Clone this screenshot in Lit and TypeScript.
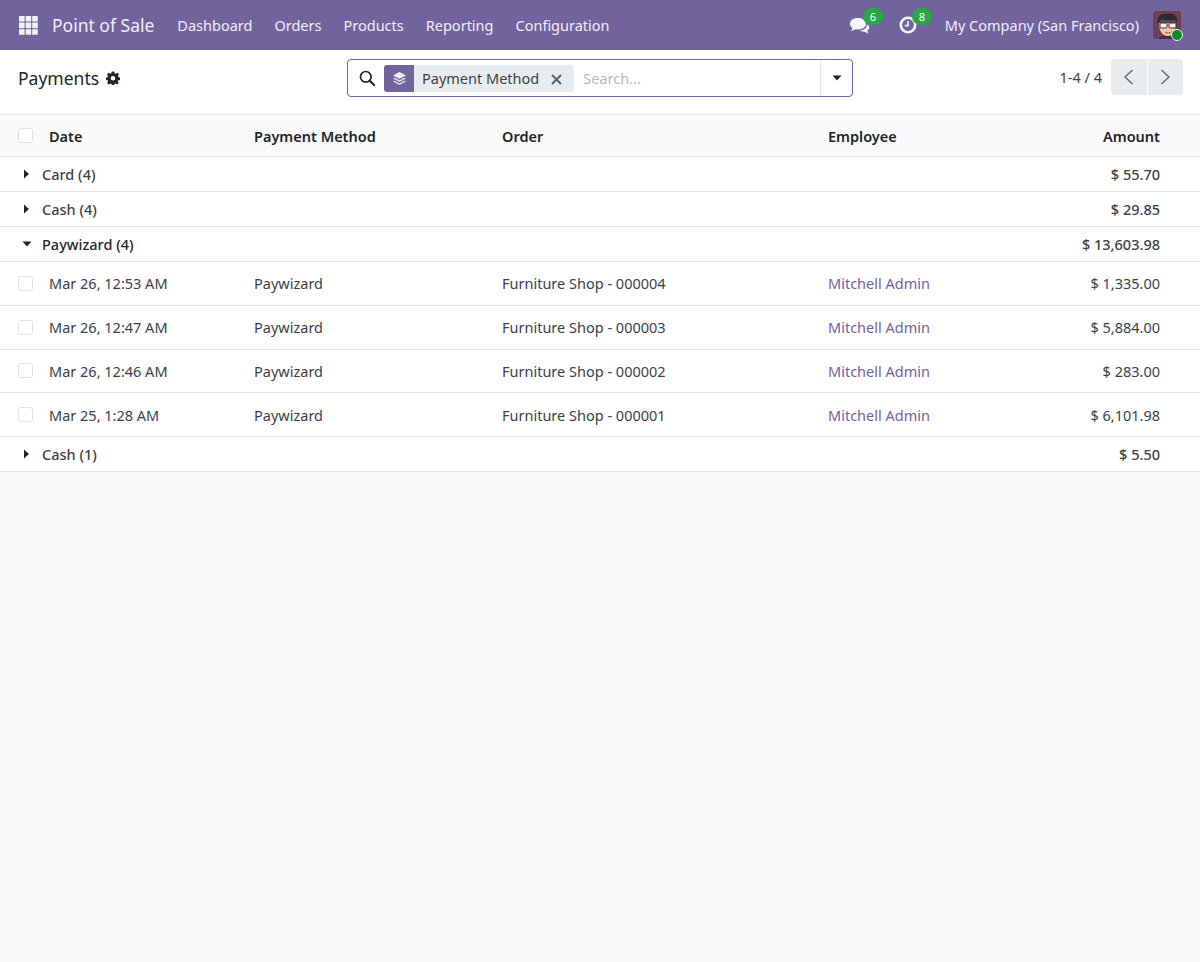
import { LitElement, css, html, svg } from "lit";
import { customElement } from "lit/decorators.js";

type Payment = { date: string; order: string; amount: string };

const PAYMENTS: Payment[] = [
  { date: "Mar 26, 12:53 AM", order: "Furniture Shop - 000004", amount: "$ 1,335.00" },
  { date: "Mar 26, 12:47 AM", order: "Furniture Shop - 000003", amount: "$ 5,884.00" },
  { date: "Mar 26, 12:46 AM", order: "Furniture Shop - 000002", amount: "$ 283.00" },
  { date: "Mar 25, 1:28 AM", order: "Furniture Shop - 000001", amount: "$ 6,101.98" },
];

const NAV = ["Dashboard", "Orders", "Products", "Reporting", "Configuration"];

const caretRight = svg`<path d="M3 1.5 L8 6 L3 10.5 Z" fill="#212529"/>`;
const caretDown = svg`<path d="M1.5 3.5 L10.5 3.5 L6 8.5 Z" fill="#212529"/>`;

@customElement("app-root")
export class AppRoot extends LitElement {
  private renderApps() {
    const cells = [];
    for (let y = 0; y < 3; y++) {
      for (let x = 0; x < 3; x++) {
        cells.push(svg`<rect x=${x * 6.6} y=${y * 6.6} width="5.6" height="5.6" rx="0.6" fill="#f3f1f8"/>`);
      }
    }
    return html`<svg class="apps" width="19" height="19" viewBox="0 0 19 19">${cells}</svg>`;
  }

  private renderAvatar() {
    return html`<span class="avatar">
      <svg width="28" height="28" viewBox="0 0 28 28">
        <rect width="28" height="28" rx="3" fill="#6e3f55"/>
        <path d="M6 28 C7 23 21 23 23 28 Z" fill="#3f2f3c"/>
        <path d="M6 12 C6 22 11 25 15 25 C20 25 23 20 23 12 Z" fill="#f3c9a8"/>
        <path d="M5 13 C3 6 8 2 14 3 C19 1 25 4 24 12 L22 9 C17 10 11 9 8 8 Z" fill="#2b2a2c"/>
        <rect x="7" y="12" width="7" height="5" rx="1" fill="#f7f3ee" stroke="#333" stroke-width="1"/>
        <rect x="16" y="12" width="7" height="5" rx="1" fill="#f7f3ee" stroke="#333" stroke-width="1"/>
        <path d="M12 21 C14 22.5 17 22.5 19 20.5" fill="none" stroke="#8a4a3c" stroke-width="1"/>
      </svg>
      <span class="online"></span>
    </span>`;
  }

  private renderNavbar() {
    return html`<header class="navbar">
      ${this.renderApps()}
      <span class="brand">Point of Sale</span>
      <nav class="menu">${NAV.map((m) => html`<span>${m}</span>`)}</nav>
      <div class="systray">
        <span class="tray-icon chat">
          <svg width="22" height="20" viewBox="0 0 22 20">
            <path d="M9 3 C4 3 1 5.5 1 8.7 C1 10.6 2 12 3.6 13 L2.2 16 L6.8 14.2 C7.5 14.4 8.2 14.4 9 14.4 C13.6 14.4 17 12 17 8.7 C17 5.5 13.6 3 9 3 Z" fill="#f6f5fa"/>
            <path d="M18 9.5 C18 13 15 15.3 10.5 15.6 C11.6 16.4 13 16.7 14.5 16.6 L19.5 18.4 L18.3 15.6 C19.6 14.7 20.3 13.5 20.3 12.2 C20.3 11 19.4 10 18 9.5 Z" fill="#f6f5fa"/>
          </svg>
          <span class="badge">6</span>
        </span>
        <span class="tray-icon clock">
          <svg width="20" height="20" viewBox="0 0 20 20">
            <circle cx="10" cy="10" r="7.2" fill="none" stroke="#f6f5fa" stroke-width="2.6"/>
            <path d="M10 6 L10 10.6 L6.8 10.6" fill="none" stroke="#f6f5fa" stroke-width="1.6"/>
          </svg>
          <span class="badge">8</span>
        </span>
        <span class="company">My Company (San Francisco)</span>
        ${this.renderAvatar()}
      </div>
    </header>`;
  }

  private renderSearch() {
    return html`<div class="search">
      <svg class="lens" width="16" height="16" viewBox="0 0 16 16">
        <circle cx="6.8" cy="6.8" r="5.3" fill="none" stroke="#212529" stroke-width="1.7"/>
        <path d="M10.8 10.8 L15 15" stroke="#212529" stroke-width="2" stroke-linecap="round"/>
      </svg>
      <span class="facet">
        <span class="facet-icon">
          <svg width="15" height="15" viewBox="0 0 15 15">
            <path d="M7.5 1 L14 4.4 L7.5 7.8 L1 4.4 Z" fill="#f3f1f8"/>
            <path d="M2.6 6.7 L7.5 9.3 L12.4 6.7 L14 7.5 L7.5 11 L1 7.5 Z" fill="#f3f1f8" opacity="0.85"/>
            <path d="M2.6 9.8 L7.5 12.4 L12.4 9.8 L14 10.6 L7.5 14 L1 10.6 Z" fill="#f3f1f8" opacity="0.85"/>
          </svg>
        </span>
        <span class="facet-label">Payment Method</span>
        <svg class="facet-x" width="11" height="11" viewBox="0 0 11 11">
          <path d="M1 1 L10 10 M10 1 L1 10" stroke="#5a5f66" stroke-width="2"/>
        </svg>
      </span>
      <span class="placeholder">Search...</span>
      <span class="drop">
        <svg width="12" height="12" viewBox="0 0 12 12">${caretDown}</svg>
      </span>
    </div>`;
  }

  private renderControlPanel() {
    return html`<section class="panel">
      <div class="title">
        <span>Payments</span>
        <svg width="14" height="14" viewBox="0 0 14 14">
          <path d="M7 4.6 A2.4 2.4 0 1 0 7 9.4 A2.4 2.4 0 1 0 7 4.6 Z" fill="#fff"/>
          <path fill-rule="evenodd" fill="#212529" d="M5.8 0.5 H8.2 L8.6 2.3 L9.8 2.8 L11.4 1.8 L13 3.5 L12 5 L12.5 6.2 L14 6.6 V8.9 L12.3 9.2 L11.8 10.4 L12.8 12 L11.1 13.6 L9.6 12.6 L8.5 13 L8.1 14 H5.9 L5.5 13 L4.3 12.6 L2.8 13.6 L1.1 12 L2.1 10.4 L1.6 9.2 L0 8.9 V6.6 L1.5 6.2 L2 5 L1 3.5 L2.6 1.8 L4.2 2.8 L5.4 2.3 Z M7 4.9 A2.3 2.3 0 1 0 7 9.5 A2.3 2.3 0 1 0 7 4.9 Z"/>
        </svg>
      </div>
      ${this.renderSearch()}
      <div class="pager">
        <span class="pager-count">1-4 / 4</span>
        <span class="pager-btns">
          <span class="pager-btn">
            <svg width="11" height="16" viewBox="0 0 11 16"><path d="M9.5 1 L2 8 L9.5 15" fill="none" stroke="#5f6670" stroke-width="1.4"/></svg>
          </span>
          <span class="pager-btn">
            <svg width="11" height="16" viewBox="0 0 11 16"><path d="M1.5 1 L9 8 L1.5 15" fill="none" stroke="#5f6670" stroke-width="1.4"/></svg>
          </span>
        </span>
      </div>
    </section>`;
  }

  private renderGroup(label: string, amount: string, open = false) {
    return html`<div class="row group ${open ? "open" : ""}">
      <span class="group-name">
        <svg width="12" height="12" viewBox="0 0 12 12">${open ? caretDown : caretRight}</svg>
        <span>${label}</span>
      </span>
      <span class="amount">${amount}</span>
    </div>`;
  }

  private renderPayment(p: Payment) {
    return html`<div class="row cols data">
      <span class="check-cell"><span class="check"></span></span>
      <span>${p.date}</span>
      <span>Paywizard</span>
      <span>${p.order}</span>
      <span class="link">Mitchell Admin</span>
      <span class="amount">${p.amount}</span>
    </div>`;
  }

  render() {
    return html`
      ${this.renderNavbar()} ${this.renderControlPanel()}
      <div class="list">
        <div class="row cols head">
          <span class="check-cell"><span class="check"></span></span>
          <span>Date</span>
          <span>Payment Method</span>
          <span>Order</span>
          <span>Employee</span>
          <span class="amount">Amount</span>
        </div>
        ${this.renderGroup("Card (4)", "$ 55.70")}
        ${this.renderGroup("Cash (4)", "$ 29.85")}
        ${this.renderGroup("Paywizard (4)", "$ 13,603.98", true)}
        ${PAYMENTS.map((p) => this.renderPayment(p))}
        ${this.renderGroup("Cash (1)", "$ 5.50")}
      </div>
    `;
  }

  static styles = css`
    :host {
      display: block;
      min-height: 962px;
      background: #f9fafb;
      color: #3c4147;
      font-family: "Noto Sans", "Open Sans", sans-serif;
      font-size: 14.5px;
    }
    .navbar {
      height: 50px;
      box-sizing: border-box;
      background: #71639e;
      display: flex;
      align-items: center;
      padding: 0 19px;
      color: #f1eff7;
    }
    .apps {
      flex: none;
    }
    .brand {
      margin-left: 14px;
      font-size: 17.5px;
    }
    .menu {
      display: flex;
      gap: 22px;
      margin-left: 23px;
      font-size: 14.5px;
    }
    .systray {
      margin-left: auto;
      display: flex;
      align-items: center;
    }
    .tray-icon {
      position: relative;
      display: flex;
    }
    .chat {
      margin-right: 27px;
    }
    .clock {
      margin-right: 27px;
    }
    .badge {
      position: absolute;
      top: -7px;
      left: 14px;
      width: 20px;
      height: 17px;
      border-radius: 9px;
      background: #28a745;
      color: #fff;
      font-size: 11px;
      line-height: 17px;
      text-align: center;
    }
    .company {
      font-size: 14.5px;
    }
    .avatar {
      position: relative;
      display: flex;
      margin-left: 14px;
    }
    .online {
      position: absolute;
      right: -2px;
      bottom: -2px;
      width: 10px;
      height: 10px;
      border-radius: 50%;
      background: #0e8a2b;
      border: 1.5px solid #e6f3ea;
    }
    .panel {
      height: 65px;
      box-sizing: border-box;
      background: #fff;
      border-bottom: 1px solid #e7e9ed;
      display: grid;
      grid-template-columns: 347px 506px 1fr;
      align-items: start;
      padding-top: 9px;
    }
    .title {
      display: flex;
      align-items: center;
      gap: 7px;
      padding-left: 18px;
      height: 38px;
      font-size: 17.5px;
      color: #212529;
    }
    .search {
      height: 38px;
      box-sizing: border-box;
      border: 1px solid #71639e;
      border-radius: 4px;
      display: flex;
      align-items: center;
      padding-left: 11px;
    }
    .facet {
      display: flex;
      align-items: center;
      height: 27px;
      margin-left: 9px;
      background: #e9ecef;
      border-radius: 3px;
      color: #3c4147;
    }
    .facet-icon {
      width: 30px;
      height: 27px;
      background: #71639e;
      border-radius: 3px 0 0 3px;
      display: flex;
      align-items: center;
      justify-content: center;
    }
    .facet-label {
      margin-left: 8px;
    }
    .facet-x {
      margin: 2px 12px 0 12px;
    }
    .placeholder {
      margin-left: 9px;
      color: #b5b9be;
    }
    .drop {
      margin-left: auto;
      width: 31px;
      height: 100%;
      border-left: 1px solid #e4e6ea;
      display: flex;
      align-items: center;
      justify-content: center;
    }
    .pager {
      display: flex;
      justify-content: flex-end;
      align-items: center;
      padding-right: 17px;
      height: 36px;
      color: #3c4147;
    }
    .pager-count {
      margin-right: 9px;
    }
    .pager-btns {
      display: flex;
      gap: 1px;
    }
    .pager-btn {
      width: 35.5px;
      height: 36px;
      background: #e9ecef;
      display: flex;
      align-items: center;
      justify-content: center;
    }
    .pager-btn:first-child {
      border-radius: 4px 0 0 4px;
    }
    .pager-btn:last-child {
      border-radius: 0 4px 4px 0;
    }
    .row {
      box-sizing: border-box;
      background: #fff;
      border-bottom: 1px solid #dee2e6;
      padding-right: 40px;
      align-items: center;
    }
    .cols {
      display: grid;
      grid-template-columns: 49px 205px 248px 326px 1fr;
      grid-template-columns: 49px 205px 248px 326px 1fr 130px;
    }
    .cols > :nth-child(5) {
      grid-column: 5;
    }
    .head {
      height: 42px;
      background: #f9fafb;
      font-weight: 600;
      color: #212529;
    }
    .data {
      height: 43.75px;
    }
    .check-cell {
      padding-left: 18px;
      display: flex;
    }
    .check {
      width: 13px;
      height: 13px;
      border: 1px solid #dee2e6;
      border-radius: 3px;
      background: #fff;
    }
    .group {
      height: 35px;
      display: flex;
      justify-content: space-between;
      font-weight: 500;
    }
    .group.open .group-name {
      color: #212529;
    }
    .group-name {
      display: flex;
      align-items: center;
      gap: 9px;
      padding-left: 21px;
    }
    .amount {
      text-align: right;
    }
    .group .amount {
      font-weight: 500;
    }
    .link {
      color: #71639e;
    }
  `;
}
